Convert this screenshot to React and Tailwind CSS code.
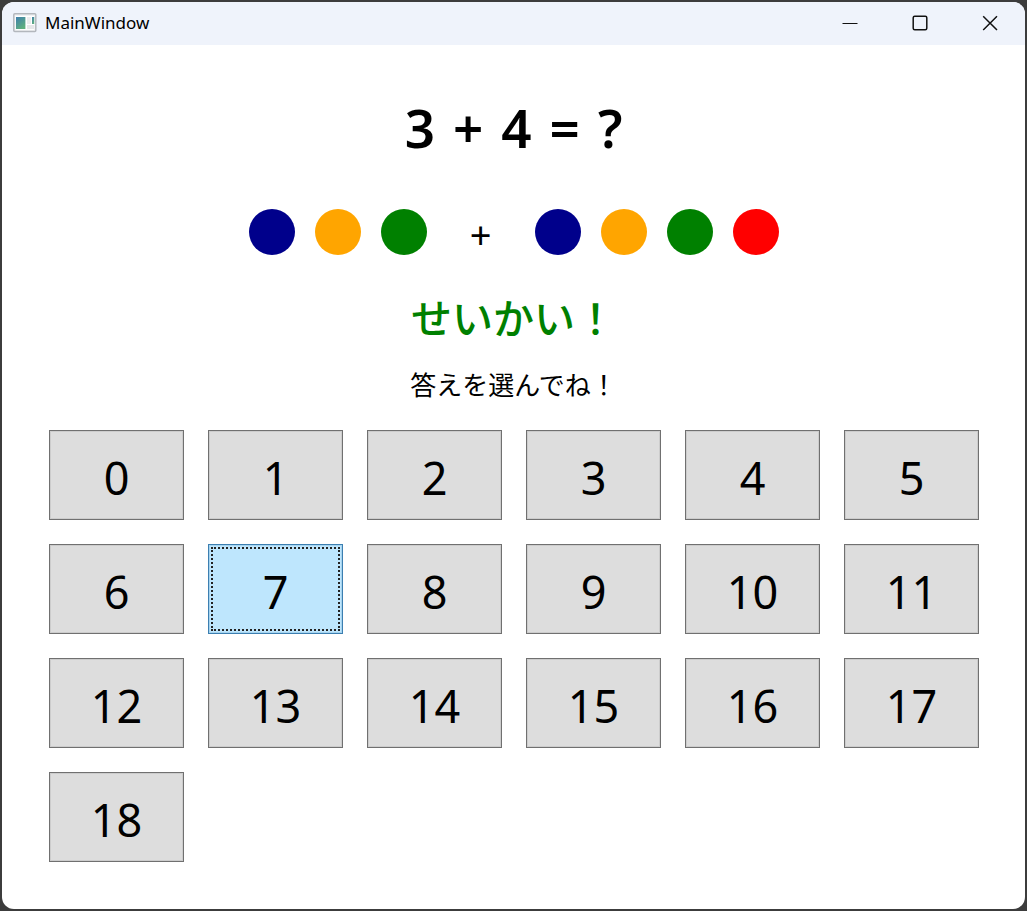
import { useState } from "react";

const QUESTION = ["3", "+", "4", "=", "?"];
const ANSWERS = Array.from({ length: 19 }, (_, i) => i);
const COLORS = ["bg-[#00008b]", "bg-[#ffa500]", "bg-[#008000]", "bg-[#ff0000]"];

function AppIcon() {
  return (
    <svg width="24" height="20" viewBox="0 0 24 20" aria-hidden="true">
      <defs>
        <linearGradient id="pane" x1="0" y1="0" x2="0.6" y2="1">
          <stop offset="0" stopColor="#3f7fae" />
          <stop offset="1" stopColor="#5fb07e" />
        </linearGradient>
      </defs>
      <rect x="0.8" y="0.8" width="22" height="17.6" rx="1" fill="#f1f2f4" stroke="#b3b7bd" strokeWidth="1.5" />
      <rect x="2.5" y="3" width="18.6" height="13.8" fill="#ffffff" />
      <rect x="3" y="4" width="9.4" height="12" fill="url(#pane)" />
      <rect x="14" y="4" width="4" height="7" fill="#ececee" />
      <rect x="14" y="12" width="7" height="4" fill="#e6e7e9" />
      <rect x="19" y="4" width="2.2" height="7" fill="url(#pane)" />
    </svg>
  );
}

function TitleButton({ label, children }) {
  return (
    <button type="button" aria-label={label} className="flex w-[70px] items-center justify-center">
      <svg width="16" height="16" viewBox="0 0 16 16" fill="none" stroke="#111" aria-hidden="true">
        {children}
      </svg>
    </button>
  );
}

function Dots({ count }) {
  return (
    <div className="flex gap-5">
      {COLORS.slice(0, count).map((color) => (
        <span key={color} className={`size-[46px] rounded-full ${color}`} />
      ))}
    </div>
  );
}

export default function App() {
  const [selected, setSelected] = useState(7);

  return (
    <div className="flex min-h-screen bg-[#3c3c3c] p-0.5 font-['Noto_Sans','Noto_Sans_CJK_JP',sans-serif] text-black">
      <div className="flex grow flex-col overflow-hidden rounded-xl bg-white">
        <header className="flex h-[43px] bg-[#eff3fb] pb-0.5">
          <div className="flex grow items-center gap-2 pl-[11px]">
            <AppIcon />
            <span className="text-[17px] leading-6">MainWindow</span>
          </div>
          <TitleButton label="Minimize">
            <path d="M0.5 8.5H15.5" />
          </TitleButton>
          <TitleButton label="Maximize">
            <rect x="1.2" y="1.2" width="13.6" height="13.6" rx="1.5" strokeWidth="1.5" />
          </TitleButton>
          <TitleButton label="Close">
            <path d="M1.2 1.2L15 15M15 1.2L1.2 15" strokeWidth="1.5" />
          </TitleButton>
        </header>

        <main className="flex flex-col items-center pt-[47px]">
          <h1 className="flex gap-[18px] text-[53px] leading-[72px] font-[560]">
            {QUESTION.map((token) => (
              <span key={token}>{token}</span>
            ))}
          </h1>
          <div className="mt-[45px] flex h-[46px] items-center gap-10">
            <Dots count={3} />
            <span className="w-7 pt-1 text-center text-[38px] leading-[46px]">+</span>
            <Dots count={4} />
          </div>
          <p className="mt-[31px] text-[41px] leading-[64px] font-medium text-[#008000]">せいかい！</p>
          <p className="mt-[13px] text-[26px] leading-[44px]">答えを選んでね！</p>
          <div className="mt-[23px] grid w-full grid-cols-6 gap-6 pr-[46px] pb-10 pl-[47px]">
            {ANSWERS.map((n) => (
              <button
                key={n}
                type="button"
                aria-pressed={n === selected}
                onClick={() => setSelected(n)}
                className={`h-[90px] border p-0.5 text-[45px] leading-none ${
                  n === selected
                    ? "border-[#3c7fb1] bg-[#bee6fd] inset-shadow-[0_0_0_1px_#a6d3ee]"
                    : "border-[#707070] bg-[#dddddd] inset-shadow-[0_0_0_1px_#cccccc]"
                }`}
              >
                <span
                  className={`flex h-full items-center justify-center border-2 border-dotted pt-1 ${
                    n === selected ? "border-[#222222]" : "border-transparent"
                  }`}
                >
                  {n}
                </span>
              </button>
            ))}
          </div>
        </main>
      </div>
    </div>
  );
}
